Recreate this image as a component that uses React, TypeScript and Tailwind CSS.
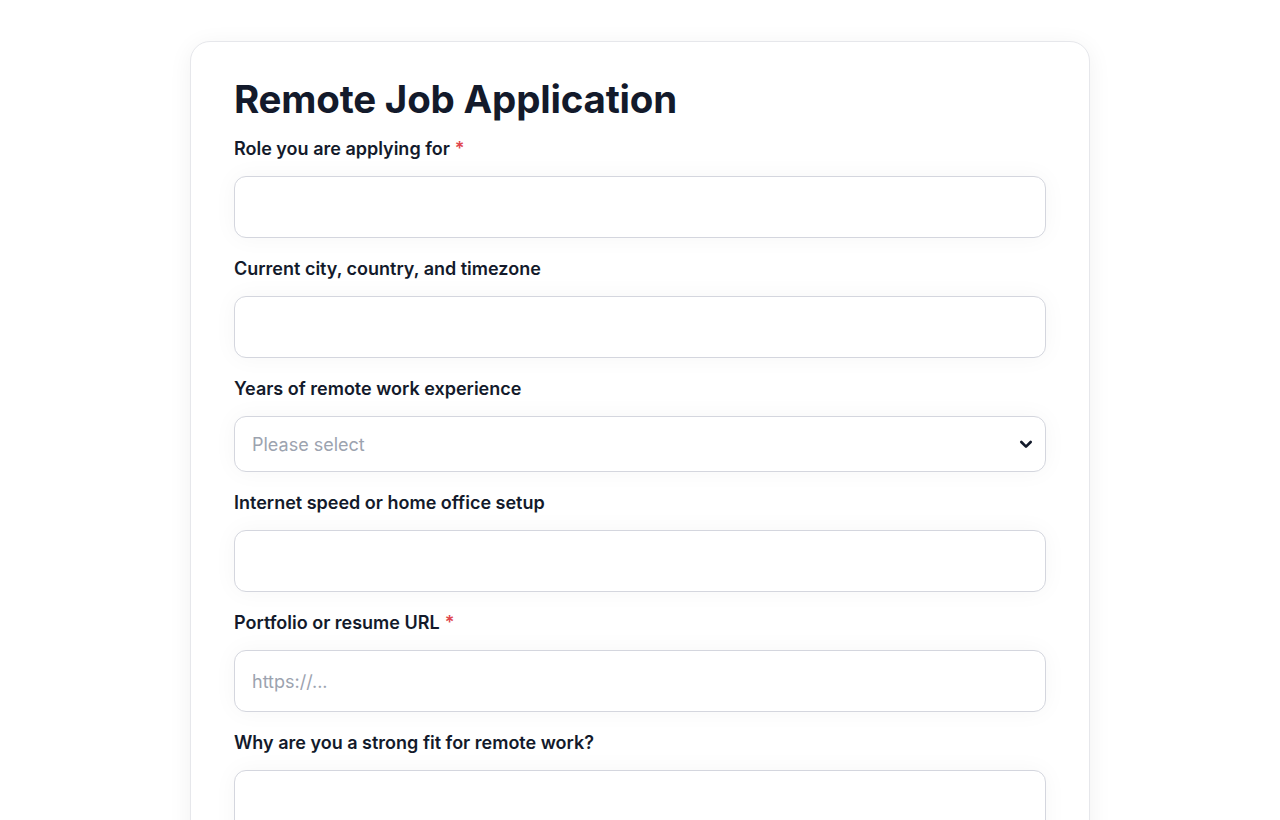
import type { ReactNode } from "react";

const inputClass =
  "block w-full rounded-[12px] border border-[#d4d6de] bg-white px-[17px] text-[18px] placeholder:text-[#9ca3af] shadow-[0_0_24px_rgba(15,23,42,0.04)] outline-none";

function Field({ label, required, children }: { label: string; required?: boolean; children: ReactNode }) {
  return (
    <div className="flex flex-col gap-[15px]">
      <label className="text-[18px] font-semibold leading-[24px] text-[#131a2b]">
        {label}
        {required ? <span className="ml-[5px] text-[#e0464e]">*</span> : null}
      </label>
      {children}
    </div>
  );
}

export default function App() {
  return (
    <div className="min-h-screen bg-white pt-[41px] font-['Inter',sans-serif]">
      <form className="mx-auto w-[900px] rounded-[20px] border border-[#e6e7eb] bg-white px-[43px] pt-[32px] pb-10 shadow-[0_4px_24px_rgba(15,23,42,0.06)]">
        <h1 className="mb-[13px] text-[38.5px] font-bold leading-[50px] tracking-[-0.2px] text-[#131a2b]">
          Remote Job Application
        </h1>
        <div className="flex flex-col gap-[19px]">
          <Field label="Role you are applying for" required>
            <input className={`${inputClass} h-[62px] text-[#111827]`} type="text" />
          </Field>
          <Field label="Current city, country, and timezone">
            <input className={`${inputClass} h-[62px] text-[#111827]`} type="text" />
          </Field>
          <Field label="Years of remote work experience">
            <div className="relative">
              <select className={`${inputClass} h-[56px] appearance-none text-[#9ca3af]`} defaultValue="">
                <option value="" disabled>
                  Please select
                </option>
                <option>Less than 1 year</option>
                <option>1–3 years</option>
                <option>3–5 years</option>
                <option>5+ years</option>
              </select>
              <svg
                className="pointer-events-none absolute right-[12px] top-1/2 h-[16px] w-[16px] -translate-y-1/2 text-[#131a2b]"
                viewBox="0 0 24 24"
                fill="none"
                stroke="currentColor"
                strokeWidth="4"
                strokeLinecap="round"
                strokeLinejoin="round"
              >
                <path d="M5 9l7 7 7-7" />
              </svg>
            </div>
          </Field>
          <Field label="Internet speed or home office setup">
            <input className={`${inputClass} h-[62px] text-[#111827]`} type="text" />
          </Field>
          <Field label="Portfolio or resume URL" required>
            <input className={`${inputClass} h-[62px] text-[#111827]`} type="url" placeholder="https://..." />
          </Field>
          <Field label="Why are you a strong fit for remote work?">
            <textarea className={`${inputClass} h-[140px] resize-none py-[15px] text-[#111827]`} />
          </Field>
        </div>
      </form>
    </div>
  );
}
